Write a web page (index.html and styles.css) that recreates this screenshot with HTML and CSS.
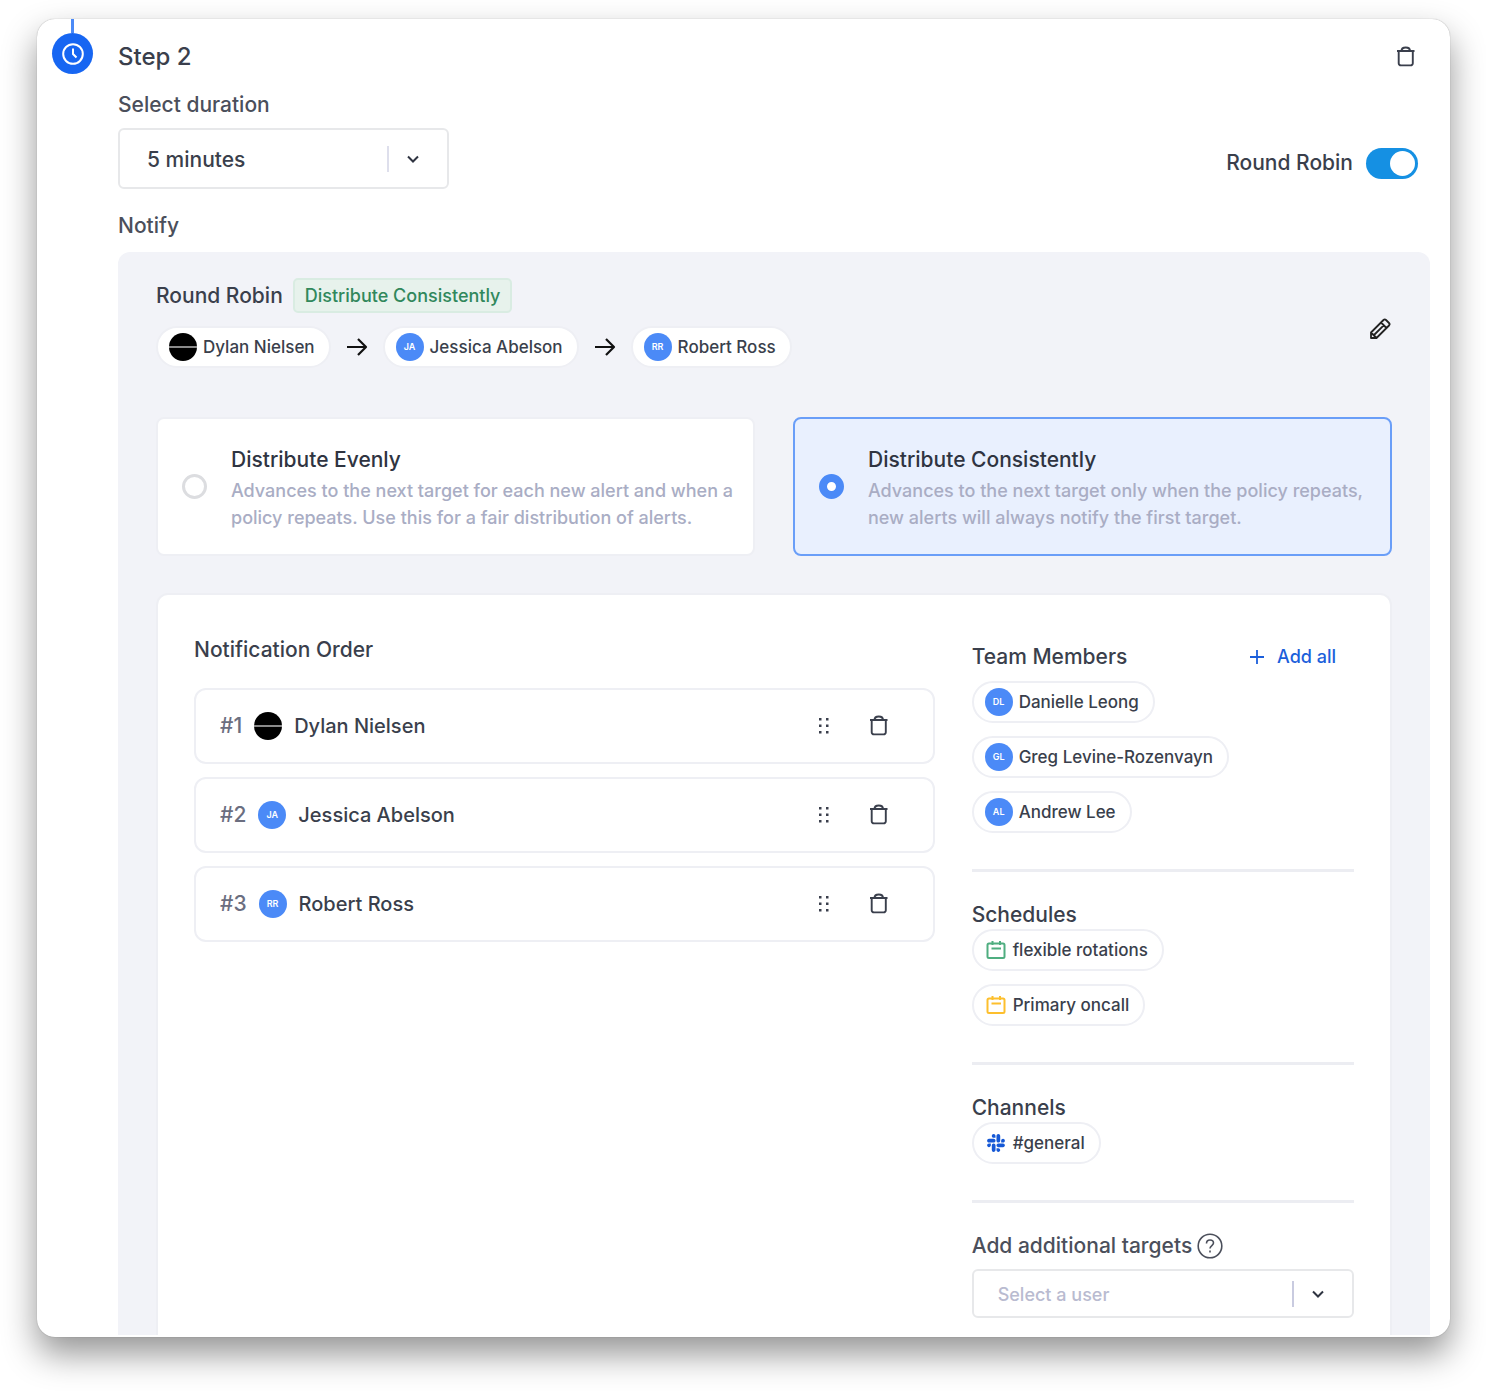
FILE: index.html
```html
<!DOCTYPE html>
<html lang="en">
<head>
<meta charset="utf-8">
<meta name="viewport" content="width=device-width, initial-scale=1">
<title>Escalation policy – Step 2</title>
<link rel="stylesheet" href="styles.css">
</head>
<body>
<svg class="sprite" aria-hidden="true">
  <symbol id="i-trash" viewBox="0 0 24 24"><path d="M3 6h17.500M7.500 6c0-2.200 1.300-3.500 4.250-3.500S16 3.800 16 6M4.700 6v12.200a2.200 2.200 0 0 0 2.200 2.200h9.700a2.200 2.200 0 0 0 2.200-2.200V6" fill="none" stroke="currentColor" stroke-width="1.900"/></symbol>
  <symbol id="i-arrow" viewBox="0 0 22 20"><path d="M1 10h19M12 2l8 8-8 8" fill="none" stroke="currentColor" stroke-width="2.200" stroke-linejoin="round"/></symbol>
  <symbol id="i-chevron" viewBox="0 0 12 12"><path d="M1 3.500 6 8.500l5-5" fill="none" stroke="currentColor" stroke-width="2"/></symbol>
  <symbol id="i-grip" viewBox="0 0 12 18"><path d="M1 1h2.500v2.500H1zM8 1h2.500v2.500H8zM1 7.500h2.500V10H1zM8 7.500h2.500V10H8zM1 14h2.500v2.500H1zM8 14h2.500v2.500H8z" fill="currentColor"/></symbol>
  <symbol id="i-calendar" viewBox="0 0 20 20"><path d="M3 3.500h14a1.500 1.500 0 0 1 1.500 1.500v11.500A1.500 1.500 0 0 1 17 18H3a1.500 1.500 0 0 1-1.500-1.500V5A1.500 1.500 0 0 1 3 3.500zM6.500 1v4M14 1v4M5.500 8.500h9.500" fill="none" stroke="currentColor" stroke-width="2"/></symbol>
  <symbol id="i-slack" viewBox="-1 -1 18 18"><path fill="currentColor" d="M3.362 10.11c0 .926-.756 1.681-1.681 1.681S0 11.036 0 10.111.756 8.430 1.680 8.430h1.682zm.846 0c0-.924.756-1.680 1.681-1.680s1.681.756 1.681 1.680v4.210c0 .924-.756 1.680-1.680 1.680a1.685 1.685 0 0 1-1.682-1.680zM5.890 3.362c-.926 0-1.682-.756-1.682-1.681S4.964 0 5.890 0s1.680.756 1.680 1.680v1.682zm0 .846c.924 0 1.680.756 1.680 1.681S6.814 7.570 5.890 7.570H1.680C.757 7.570 0 6.814 0 5.890c0-.926.756-1.682 1.680-1.682zm6.749 1.682c0-.926.755-1.682 1.680-1.682S16 4.964 16 5.889s-.756 1.681-1.680 1.681h-1.681zm-.848 0c0 .924-.755 1.680-1.680 1.680A1.685 1.685 0 0 1 8.430 5.890V1.680C8.430.757 9.186 0 10.110 0c.926 0 1.681.756 1.681 1.680zm-1.681 6.748c.926 0 1.682.756 1.682 1.681S11.036 16 10.110 16s-1.681-.756-1.681-1.680v-1.682h1.680zm0-.847c-.924 0-1.680-.755-1.680-1.680s.756-1.681 1.680-1.681h4.210c.924 0 1.680.756 1.680 1.680 0 .926-.756 1.681-1.680 1.681z"/></symbol>
</svg>

<main class="card">
  <div class="rail">
    <span class="rail-line"></span>
    <span class="rail-dot">
      <svg width="24" height="24" viewBox="0 0 24 24" aria-hidden="true"><circle cx="12" cy="12" r="9.800" fill="none" stroke="currentColor" stroke-width="2"/><path d="M12 6.500V12l3.500 3.500" fill="none" stroke="currentColor" stroke-width="2"/></svg>
    </span>
  </div>

  <div class="step">
    <header class="step-head">
      <h1 class="step-title">Step 2</h1>
      <button class="icon-btn" type="button" aria-label="Delete step"><svg width="24" height="24"><use href="#i-trash"/></svg></button>
    </header>

    <div class="settings">
      <div>
        <label class="label" for="duration">Select duration</label>
        <div class="select select-lg">
          <select id="duration"><option>5 minutes</option></select>
          <span class="select-end"><svg width="12" height="12" aria-hidden="true"><use href="#i-chevron"/></svg></span>
        </div>
      </div>
      <label class="toggle">Round Robin <input type="checkbox" role="switch" checked></label>
    </div>

    <h2 class="label notify">Notify</h2>

    <section class="panel">
      <div class="summary">
        <div>
          <div class="summary-title">
            <h3 class="heading">Round Robin</h3>
            <span class="badge">Distribute Consistently</span>
          </div>
          <div class="chain">
            <span class="pill"><span class="avatar avatar-photo"></span>Dylan Nielsen</span>
            <svg width="22" height="20" aria-hidden="true"><use href="#i-arrow"/></svg>
            <span class="pill"><span class="avatar">JA</span>Jessica Abelson</span>
            <svg width="22" height="20" aria-hidden="true"><use href="#i-arrow"/></svg>
            <span class="pill"><span class="avatar">RR</span>Robert Ross</span>
          </div>
        </div>
        <button class="icon-btn edit" type="button" aria-label="Edit"><svg width="24" height="24" viewBox="0 0 24 24" fill="none" stroke="currentColor" stroke-width="1.800" stroke-linejoin="round"><path d="M3 21v-5.500L15.500 3c.800-.800 1.700-.800 2.500 0l3 3c.800.800.800 1.700 0 2.500L8.500 21zM3 15.500 8.500 21M13 5.500l5.500 5.500M6 18 15.700 8.300"/></svg></button>
      </div>

      <div class="options">
        <label class="option">
          <input type="radio" name="mode">
          <span><span class="option-title">Distribute Evenly</span>
          <span class="option-text">Advances to the next target for each new alert and when a policy repeats. Use this for a fair distribution of alerts.</span></span>
        </label>
        <label class="option">
          <input type="radio" name="mode" checked>
          <span><span class="option-title">Distribute Consistently</span>
          <span class="option-text">Advances to the next target only when the policy repeats, new alerts will always notify the first target.</span></span>
        </label>
      </div>

      <div class="targets">
        <section class="order">
          <h3 class="heading">Notification Order</h3>
          <ol class="rows">
            <li class="row"><span class="rank">#1</span><span class="avatar avatar-photo"></span><span class="name">Dylan Nielsen</span>
              <button class="icon-btn" type="button" aria-label="Reorder"><svg width="12" height="18"><use href="#i-grip"/></svg></button>
              <button class="icon-btn" type="button" aria-label="Remove"><svg width="24" height="24"><use href="#i-trash"/></svg></button></li>
            <li class="row"><span class="rank">#2</span><span class="avatar">JA</span><span class="name">Jessica Abelson</span>
              <button class="icon-btn" type="button" aria-label="Reorder"><svg width="12" height="18"><use href="#i-grip"/></svg></button>
              <button class="icon-btn" type="button" aria-label="Remove"><svg width="24" height="24"><use href="#i-trash"/></svg></button></li>
            <li class="row"><span class="rank">#3</span><span class="avatar">RR</span><span class="name">Robert Ross</span>
              <button class="icon-btn" type="button" aria-label="Reorder"><svg width="12" height="18"><use href="#i-grip"/></svg></button>
              <button class="icon-btn" type="button" aria-label="Remove"><svg width="24" height="24"><use href="#i-trash"/></svg></button></li>
          </ol>
        </section>

        <div class="sources">
          <section class="group">
            <div class="group-head">
              <h3 class="heading">Team Members</h3>
              <button class="add-all" type="button"><svg width="16" height="16" viewBox="0 0 16 16" aria-hidden="true"><path d="M8 1v14M1 8h14" stroke="currentColor" stroke-width="1.800"/></svg>Add all</button>
            </div>
            <div class="pills">
              <button class="pill" type="button"><span class="avatar">DL</span>Danielle Leong</button>
              <button class="pill" type="button"><span class="avatar">GL</span>Greg Levine-Rozenvayn</button>
              <button class="pill" type="button"><span class="avatar">AL</span>Andrew Lee</button>
            </div>
          </section>
          <section class="group">
            <h3 class="heading">Schedules</h3>
            <div class="pills">
              <button class="pill" type="button"><svg class="green" width="20" height="20" aria-hidden="true"><use href="#i-calendar"/></svg>flexible rotations</button>
              <button class="pill" type="button"><svg class="amber" width="20" height="20" aria-hidden="true"><use href="#i-calendar"/></svg>Primary oncall</button>
            </div>
          </section>
          <section class="group">
            <h3 class="heading">Channels</h3>
            <div class="pills">
              <button class="pill" type="button"><svg class="blue" width="20" height="20" aria-hidden="true"><use href="#i-slack"/></svg>#general</button>
            </div>
          </section>
          <section class="group">
            <div class="extra-head">
              <label class="label" for="extra">Add additional targets</label>
              <svg width="26" height="26" viewBox="0 0 26 26" aria-hidden="true" fill="none" stroke="currentColor" stroke-width="1.600"><circle cx="13" cy="13" r="11.800"/><path d="M9.500 10.500c0-2.200 1.500-3.500 3.500-3.500s3.500 1.200 3.500 3.100c0 2.500-3.500 2.500-3.500 5.400M13 17.500v2"/></svg>
            </div>
            <div class="select select-sm">
              <select id="extra"><option>Select a user</option></select>
              <span class="select-end"><svg width="12" height="12" aria-hidden="true"><use href="#i-chevron"/></svg></span>
            </div>
          </section>
        </div>
      </div>
    </section>
  </div>
</main>
</body>
</html>
```
FILE: styles.css
```css
:root {
  --ink: #3a3f4c;
  --ink-strong: #2f3441;
  --label: #4b4f5b;
  --muted: #a9adc4;
  --line: #eeeff4;
  --surface: #f2f3f8;
  --blue: #4b8af7;
  --font: Inter, "Liberation Sans", sans-serif;
}

* { box-sizing: border-box; }

body {
  margin: 0;
  padding: 19px 36px 55px 37px;
  background: #fff;
  color: var(--ink);
  font: 450 21px/28px var(--font);
}

h1, h2, h3, ol { margin: 0; padding: 0; font-weight: inherit; }
svg { display: block; flex: none; }
.sprite { position: absolute; width: 0; height: 0; }
button, select { font: inherit; color: inherit; }

.card {
  display: grid;
  grid-template-columns: 41px minmax(0, 1fr);
  gap: 25px;
  padding: 0 20px 2px 15px;
  border-radius: 18px;
  background: #fff;
  box-shadow: 0 0 1px rgba(0, 0, 0, 0.4), 0 17px 34px rgba(0, 0, 0, 0.42);
}

/* Timeline */
.rail { display: flex; flex-direction: column; align-items: center; }
.rail-line { width: 3px; height: 14px; background: #4b8af7; }
.rail-dot {
  display: grid;
  place-items: center;
  width: 41px;
  height: 41px;
  border-radius: 50%;
  background: #1766f2;
  color: #fff;
}

/* Step header and settings */
.step { padding-top: 22px; }
.step-head { display: flex; justify-content: space-between; align-items: center; height: 32px; padding-right: 12px; }
.step-title { font-size: 24px; line-height: 32px; font-weight: 500; }
.icon-btn { display: grid; place-items: center; padding: 0; border: 0; background: none; cursor: pointer; color: var(--ink); }
.settings { display: flex; justify-content: space-between; align-items: flex-end; margin-top: 18px; padding-right: 12px; }
.label { display: block; color: var(--label); font-size: 21px; line-height: 28px; }
.notify { margin-top: 23px; }
.heading { font-size: 21px; line-height: 28px; }

.select { display: grid; align-items: center; }
.select > * { grid-area: 1 / 1; }
.select select {
  appearance: none;
  width: 100%;
  border: 2px solid #e7e8ea;
  border-radius: 6px;
  background: #fff;
}
.select-end {
  display: flex;
  align-items: center;
  justify-self: end;
  height: 26px;
  padding-left: 18px;
  border-left: 2px solid #dedfec;
  pointer-events: none;
  color: var(--ink-strong);
}
.select-lg { width: 331px; margin-top: 9px; }
.select-lg select { height: 61px; padding: 2px 27px 0; }
.select-lg .select-end { margin-right: 30px; }
.select-sm { margin-top: 9px; }
.select-sm select { height: 49px; padding: 2px 24px 0; font-size: 18px; color: #b9bbd0; }
.select-sm .select-end { margin-right: 30px; border-color: #c9cbe0; }

.toggle { display: flex; align-items: center; gap: 13px; height: 52px; cursor: pointer; }
.toggle input {
  appearance: none;
  display: flex;
  justify-content: flex-end;
  width: 52px;
  height: 31px;
  margin: 0;
  padding: 3px;
  border-radius: 16px;
  background: #1590e3;
}
.toggle input::before { content: ""; width: 25px; height: 25px; border-radius: 50%; background: #fff; }

/* Notify panel */
.panel { margin-top: 12px; padding: 26px 38px 0; border-radius: 12px 12px 0 0; background: var(--surface); }
.summary { display: flex; justify-content: space-between; align-items: center; }
.summary-title { display: flex; align-items: center; gap: 10px; }
.badge {
  height: 35px;
  padding: 0 10px;
  border: 2px solid #d9ece2;
  border-radius: 5px;
  background: #e7f2ec;
  color: #31885c;
  font-size: 18px;
  line-height: 31px;
}
.chain { display: flex; align-items: center; gap: 15px; margin-top: 13px; color: #111; }
.edit { margin-top: 12px; color: #222; }

.pill {
  display: flex;
  align-items: center;
  gap: 6px;
  height: 42px;
  padding: 0 14px 0 11px;
  border: 2px solid var(--line);
  border-radius: 21px;
  background: #fff;
  color: var(--ink);
  font-size: 17px;
  font-weight: 500;
  line-height: 28px;
}
.pill svg { margin: 0 1px; }
.avatar {
  display: grid;
  place-items: center;
  flex: none;
  width: 28px;
  height: 28px;
  border-radius: 50%;
  background: var(--blue);
  color: #fff;
  font-size: 9px;
  font-weight: 600;
  line-height: 12px;
}
.avatar-photo { background: linear-gradient(#000 13px, #8a8a8a 13px, #8a8a8a 15px, #000 15px); }

.options { display: grid; grid-template-columns: 1fr 1fr; gap: 38px; margin-top: 49px; }
.option {
  display: flex;
  align-items: center;
  gap: 24px;
  height: 139px;
  padding: 0 16px 0 24px;
  border: 2px solid var(--line);
  border-radius: 8px;
  background: #fff;
  cursor: pointer;
}
.option:has(:checked) { border-color: #6a9ef8; background: #e9f0fe; }
.option input {
  appearance: none;
  flex: none;
  width: 25px;
  height: 25px;
  margin: 0;
  border: 3px solid #dcdde0;
  border-radius: 50%;
  background: #fff;
}
.option input:checked { border: 8px solid var(--blue); }
.option-title { display: block; color: var(--ink-strong); line-height: 34px; }
.option-text { display: block; color: var(--muted); font-size: 18px; line-height: 27px; }

/* Targets */
.targets {
  display: grid;
  grid-template-columns: minmax(0, 740fr) minmax(0, 382fr);
  gap: 37px;
  margin-top: 37px;
  padding: 41px 36px 17px;
  border: solid var(--line);
  border-width: 2px 2px 0;
  border-radius: 12px 12px 0 0;
  background: #fff;
}
.rows { display: grid; gap: 13px; margin-top: 24px; list-style: none; }
.row {
  display: flex;
  align-items: center;
  gap: 12px;
  height: 76px;
  padding: 0 42px 0 24px;
  border: 2px solid var(--line);
  border-radius: 12px;
}
.rank { color: #6b6e80; }
.name { flex: 1; font-size: 20px; font-weight: 500; }
.row .icon-btn + .icon-btn { margin-left: 25px; }

.sources { padding-top: 7px; }
.group + .group { margin-top: 36px; padding-top: 29px; border-top: 3px solid #ecedf2; }
.group-head { display: flex; justify-content: space-between; align-items: center; margin-bottom: 10px; padding-right: 18px; }
.add-all {
  display: flex;
  align-items: center;
  gap: 12px;
  padding: 0;
  border: 0;
  background: none;
  color: #1b5fdb;
  font-size: 18px;
  cursor: pointer;
}
.pills { display: flex; flex-direction: column; align-items: flex-start; gap: 13px; }
.extra-head { display: flex; align-items: center; gap: 5px; color: var(--label); }
.green { color: #4fae80; }
.amber { color: #fdbf2d; }
.blue { color: #1558d6; }
```
